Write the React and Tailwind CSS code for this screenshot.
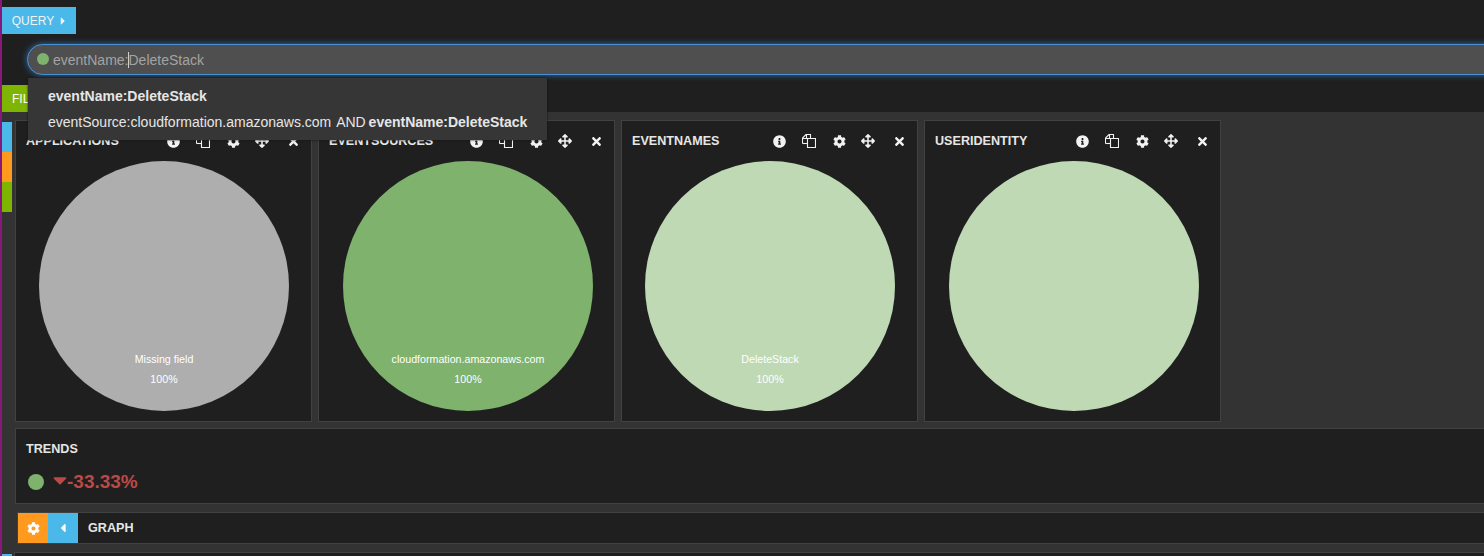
import React from 'react';
import { FaInfoCircle, FaCog, FaArrowsAlt, FaTimes, FaCaretRight, FaCaretLeft, FaCaretDown } from 'react-icons/fa';

const panels = [
  { title: 'APPLICATIONS', color: 'bg-[#aeaeae]', label: 'Missing field', offset: 'ml-[22.5px]' },
  { title: 'EVENTSOURCES', color: 'bg-[#7eb26d]', label: 'cloudformation.amazonaws.com', offset: 'ml-[23.5px]' },
  { title: 'EVENTNAMES', color: 'bg-[#bfd9b5]', label: 'DeleteStack', offset: 'ml-[22.5px]' },
  { title: 'USERIDENTITY', color: 'bg-[#bfd9b5]', label: null, offset: 'ml-[23.5px]' },
];

// fa-files-o is not in the fa5 set, so it is drawn by hand
const FilesIcon = () => (
  <svg width="14" height="14" viewBox="0 0 14 14" fill="none" stroke="currentColor" strokeWidth="1.1">
    <path d="M0.5 9.5V4L4 0.5H8.5V4" />
    <path d="M0.5 4.5H4.5V0.5" />
    <path d="M0.5 9.5H5.5" />
    <path d="M5.5 4.5H13.5V13.5H5.5Z" fill="#1f1f1f" />
  </svg>
);

const PanelHeader = ({ title }) => (
  <div className="flex h-[40px] items-center pl-[10px] text-[#e6e6e6]">
    <span className="flex-1 text-[12.6px] font-bold">{title}</span>
    <div className="flex items-center pr-px text-[#f2f2f2]">
      <span className="flex w-[30px] justify-center"><FaInfoCircle size={13} /></span>
      <span className="flex w-[30px] justify-center"><FilesIcon /></span>
      <span className="flex w-[30px] justify-center"><FaCog size={13} /></span>
      <span className="flex w-[28px] justify-center"><FaArrowsAlt size={14} /></span>
      <span className="flex w-[34px] justify-center"><FaTimes size={13} /></span>
    </div>
  </div>
);

const PiePanel = ({ panel }) => (
  <div className="h-[302px] w-[297px] border border-[#414141] bg-[#1f1f1f]">
    <PanelHeader title={panel.title} />
    <div className={`flex h-[250px] w-[250px] flex-col items-center justify-end rounded-full pb-[22px] pl-[1px] text-[10.67px] text-white ${panel.color} ${panel.offset}`}>
      {panel.label && (
        <>
          <span className="leading-[20px]">{panel.label}</span>
          <span className="leading-[20px]">100%</span>
        </>
      )}
    </div>
  </div>
);

export default function App() {
  return (
    <div className="relative flex h-[556px] w-full flex-col overflow-hidden border-l-2 border-[#85187a] bg-[#1f1f1f] font-['Liberation_Sans',sans-serif]">
      {/* Query and filter bars */}
      <div className="h-[112px] shrink-0 pt-[7px]">
        <button className="flex h-[27px] w-[74px] items-center justify-center gap-[3px] bg-[#4ab9ea] pl-[3px] text-[12px] text-[#f2f2f2]">
          QUERY <FaCaretRight size={12} />
        </button>
        <div className="ml-[25px] mt-[10px] flex h-[31px] w-[1480px] items-center rounded-l-full border border-[#4a90d4] bg-[#4f4f4f] pl-[9px] pt-[1px] text-[14px] text-[#a3a3a3] shadow-[0_0_6px_#2f6fa8]">
          <span className="mr-[4px] -mt-[2px] h-[12px] w-[12px] rounded-full bg-[#7eb26d]" />
          <span>eventName:</span>
          <span className="-mr-px h-[16px] w-px bg-[#cfcfcf]" />
          <span>DeleteStack</span>
        </div>
        <button className="mt-[10px] flex h-[27px] w-[90px] items-center bg-[#7eb500] pl-[10px] text-[12px] text-white">
          FILTERING
        </button>
      </div>

      {/* Autocomplete */}
      <div className="absolute left-[26px] top-[78px] z-10 h-[62px] w-[519px] bg-[#363636] py-[8px] pl-[20px] text-[14px] leading-[20px] text-[#e6e6e6] shadow-[0_0_2px_#111]">
        <div className="mb-[6px] font-bold">eventName:DeleteStack</div>
        <div>eventSource:cloudformation.amazonaws.com <span className="ml-px">AND</span> <b className="-ml-px">eventName:DeleteStack</b></div>
      </div>

      <div className="flex min-h-0 flex-1 overflow-hidden bg-[#333333]">
        {/* Rail */}
        <div className="relative w-[10px] shrink-0 pt-[10px]">
          <div className="h-[30px] bg-[#4ab9ea]" />
          <div className="h-[30px] bg-[#ff9a1e]" />
          <div className="h-[30px] bg-[#7eb500]" />
          <div className="absolute bottom-0 h-[2px] w-[10px] bg-[#4ab9ea]" />
        </div>

        <div className="w-[1480px] shrink-0 pl-[3px] pt-[8px]">
          <div className="flex gap-[6px]">
            {panels.map((panel) => (
              <PiePanel key={panel.title} panel={panel} />
            ))}
          </div>

          <div className="mt-[6px] h-[76px] border border-[#414141] bg-[#1f1f1f] pl-[10px]">
            <div className="pt-[12px] text-[12.6px] font-bold leading-[16px] text-[#e6e6e6]">TRENDS</div>
            <div className="mt-[12px] flex items-center pl-[2px]">
              <span className="h-[16px] w-[16px] rounded-full bg-[#7eb26d]" />
              <span className="-mr-[4px] ml-[5px] text-[#b94a48]"><FaCaretDown size={22} className="-mt-[5px]" /></span>
              <span className="text-[19px] font-bold leading-[26px] text-[#b94a48]">-33.33%</span>
            </div>
          </div>

          <div className="ml-[2px] mt-[8px] flex h-[32px] items-center border border-[#414141] bg-[#1f1f1f]">
            <span className="flex h-[30px] w-[30px] items-center justify-center bg-[#ff9a1e] text-white"><FaCog size={13} /></span>
            <span className="flex h-[30px] w-[30px] items-center justify-center bg-[#4ab9ea] text-white"><FaCaretLeft size={14} /></span>
            <span className="ml-[10px] text-[12.6px] font-bold text-[#e6e6e6]">GRAPH</span>
          </div>

          <div className="-ml-[1px] mt-[8px] h-[20px] border border-[#414141] bg-[#1f1f1f]" />
        </div>
      </div>
    </div>
  );
}
